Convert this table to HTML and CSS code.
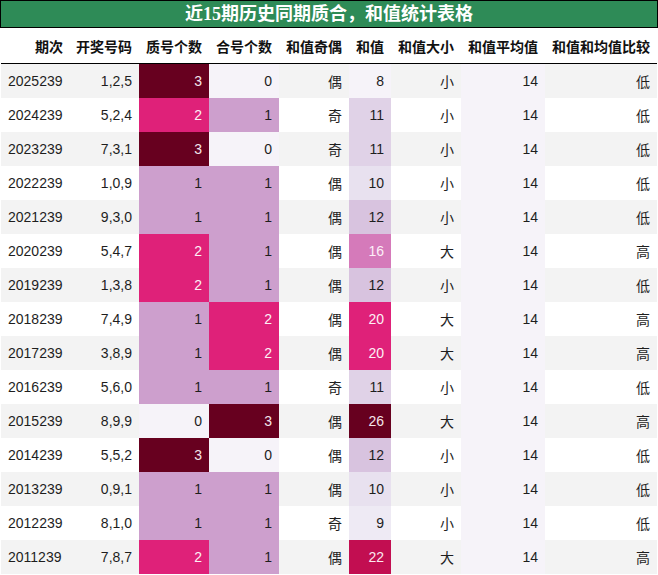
FILE: index.html
```html
<!DOCTYPE html>
<html lang="zh">
<head>
<meta charset="utf-8">
<title>近15期历史同期质合，和值统计表格</title>
<link rel="stylesheet" href="styles.css">
</head>
<body>
<div class="title">近15期历史同期质合，和值统计表格</div>
<table class="grid">
  <colgroup>
    <col class="c1"><col class="c2"><col class="c3"><col class="c4"><col class="c5"><col class="c6"><col class="c7"><col class="c8"><col class="c9">
  </colgroup>
  <thead>
    <tr>
      <th>期次</th><th>开奖号码</th><th>质号个数</th><th>合号个数</th><th>和值奇偶</th><th>和值</th><th>和值大小</th><th>和值平均值</th><th>和值和均值比较</th>
    </tr>
  </thead>
  <tbody>
    <tr class="odd"><td class="first">2025239</td><td>1,2,5</td><td class="h3">3</td><td class="h0">0</td><td class="cjk">偶</td><td class="s8">8</td><td class="cjk">小</td><td class="avg">14</td><td class="cjk">低</td></tr>
    <tr><td class="first">2024239</td><td>5,2,4</td><td class="h2">2</td><td class="h1">1</td><td class="cjk">奇</td><td class="s11">11</td><td class="cjk">小</td><td class="avg">14</td><td class="cjk">低</td></tr>
    <tr class="odd"><td class="first">2023239</td><td>7,3,1</td><td class="h3">3</td><td class="h0">0</td><td class="cjk">奇</td><td class="s11">11</td><td class="cjk">小</td><td class="avg">14</td><td class="cjk">低</td></tr>
    <tr><td class="first">2022239</td><td>1,0,9</td><td class="h1">1</td><td class="h1">1</td><td class="cjk">偶</td><td class="s10">10</td><td class="cjk">小</td><td class="avg">14</td><td class="cjk">低</td></tr>
    <tr class="odd"><td class="first">2021239</td><td>9,3,0</td><td class="h1">1</td><td class="h1">1</td><td class="cjk">偶</td><td class="s12">12</td><td class="cjk">小</td><td class="avg">14</td><td class="cjk">低</td></tr>
    <tr><td class="first">2020239</td><td>5,4,7</td><td class="h2">2</td><td class="h1">1</td><td class="cjk">偶</td><td class="s16">16</td><td class="cjk">大</td><td class="avg">14</td><td class="cjk">高</td></tr>
    <tr class="odd"><td class="first">2019239</td><td>1,3,8</td><td class="h2">2</td><td class="h1">1</td><td class="cjk">偶</td><td class="s12">12</td><td class="cjk">小</td><td class="avg">14</td><td class="cjk">低</td></tr>
    <tr><td class="first">2018239</td><td>7,4,9</td><td class="h1">1</td><td class="h2">2</td><td class="cjk">偶</td><td class="s20">20</td><td class="cjk">大</td><td class="avg">14</td><td class="cjk">高</td></tr>
    <tr class="odd"><td class="first">2017239</td><td>3,8,9</td><td class="h1">1</td><td class="h2">2</td><td class="cjk">偶</td><td class="s20">20</td><td class="cjk">大</td><td class="avg">14</td><td class="cjk">高</td></tr>
    <tr><td class="first">2016239</td><td>5,6,0</td><td class="h1">1</td><td class="h1">1</td><td class="cjk">奇</td><td class="s11">11</td><td class="cjk">小</td><td class="avg">14</td><td class="cjk">低</td></tr>
    <tr class="odd"><td class="first">2015239</td><td>8,9,9</td><td class="h0">0</td><td class="h3">3</td><td class="cjk">偶</td><td class="s26">26</td><td class="cjk">大</td><td class="avg">14</td><td class="cjk">高</td></tr>
    <tr><td class="first">2014239</td><td>5,5,2</td><td class="h3">3</td><td class="h0">0</td><td class="cjk">偶</td><td class="s12">12</td><td class="cjk">小</td><td class="avg">14</td><td class="cjk">低</td></tr>
    <tr class="odd"><td class="first">2013239</td><td>0,9,1</td><td class="h1">1</td><td class="h1">1</td><td class="cjk">偶</td><td class="s10">10</td><td class="cjk">小</td><td class="avg">14</td><td class="cjk">低</td></tr>
    <tr><td class="first">2012239</td><td>8,1,0</td><td class="h1">1</td><td class="h1">1</td><td class="cjk">奇</td><td class="s9">9</td><td class="cjk">小</td><td class="avg">14</td><td class="cjk">低</td></tr>
    <tr class="odd"><td class="first">2011239</td><td>7,8,7</td><td class="h2">2</td><td class="h1">1</td><td class="cjk">偶</td><td class="s22">22</td><td class="cjk">大</td><td class="avg">14</td><td class="cjk">高</td></tr>
  </tbody>
</table>
</body>
</html>
```

FILE: styles.css
```css
html, body {
  margin: 0;
  padding: 0;
  background: #ffffff;
}

body {
  width: 658px;
  font-family: "Liberation Sans", "Noto Sans CJK SC", sans-serif;
  color: #1e1e1e;
}

.title {
  box-sizing: border-box;
  width: 658px;
  height: 28px;
  border: 1px solid #000000;
  background: #2e8b57;
  color: #ffffff;
  font-family: "Liberation Serif", "Noto Sans CJK SC", serif;
  font-weight: bold;
  font-size: 18px;
  line-height: 26px;
  text-align: center;
}

.grid {
  margin-left: 1px;
  width: 656px;
  table-layout: fixed;
  border-collapse: separate;
  border-spacing: 0;
  font-size: 14px;
}

.c1 { width: 69px; }
.c2 { width: 69px; }
.c3 { width: 70px; }
.c4 { width: 70px; }
.c5 { width: 70px; }
.c6 { width: 42px; }
.c7 { width: 70px; }
.c8 { width: 84px; }
.c9 { width: 112px; }

.grid th {
  height: 35px;
  padding: 0 7px 0 0;
  border-bottom: 1px solid #000000;
  text-align: right;
  font-family: "Liberation Sans", "Noto Sans CJK SC", sans-serif;
  font-weight: bold;
  font-size: 14px;
  color: #111111;
  white-space: nowrap;
}

.grid tbody tr {
  height: 34px;
}

.grid td {
  padding: 0 7px 0 0;
  text-align: right;
  white-space: nowrap;
  line-height: 16px;
}

.grid td.first {
  text-align: left;
  padding-left: 7px;
}

.grid td.cjk {
  font-family: "Noto Sans CJK SC", sans-serif;
}

.grid tr.odd {
  background: #f3f3f3;
}

/* PuRd heat map for counts 0..3 */
.h0 { background: #f6f3f9; }
.h1 { background: #cd9fcd; }
.h2 { background: #df2179; color: #fdf0f5; }
.h3 { background: #67001f; color: #f5e6ea; }

/* PuRd heat map for sums 8..26 */
.s8  { background: #f6f3f9; }
.s9  { background: #eeeaf4; }
.s10 { background: #e8e1ef; }
.s11 { background: #e0d2e7; }
.s12 { background: #d8c3df; }
.s16 { background: #d57aba; color: #fdf0f8; }
.s20 { background: #df2179; color: #fdf0f5; }
.s22 { background: #c20e51; color: #fbe9ef; }
.s26 { background: #67001f; color: #f5e6ea; }

.avg { background: #f6f3f9; }
```
